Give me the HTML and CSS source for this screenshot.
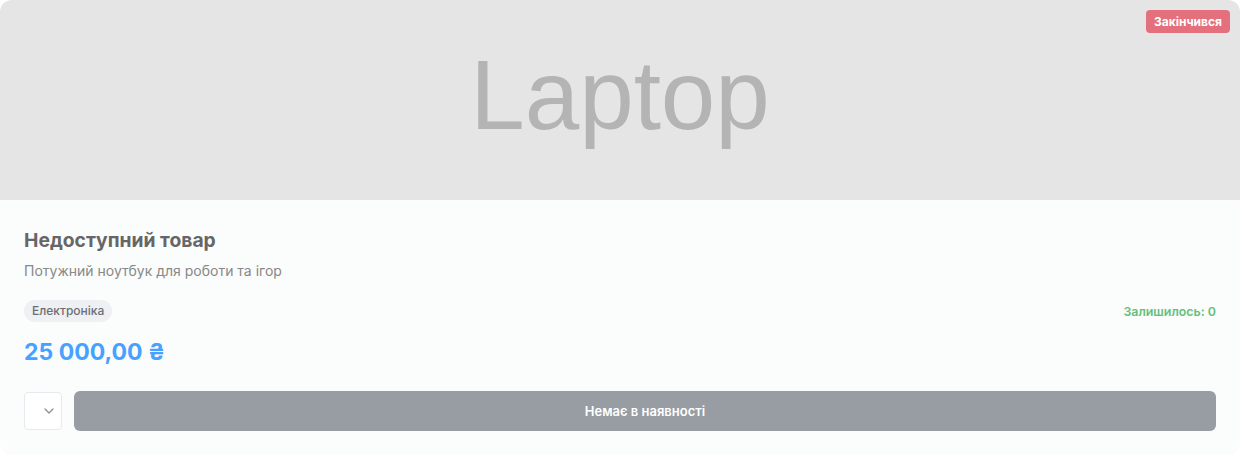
FILE: index.html
```html
<!DOCTYPE html>
<html lang="uk">
<head>
<meta charset="utf-8">
<link rel="stylesheet" href="styles.css">
</head>
<body>
<div class="card">
  <div class="media">
    <span class="media-text">Laptop</span>
    <span class="status">Закінчився</span>
  </div>
  <div class="body">
    <h3 class="title">Недоступний товар</h3>
    <p class="desc">Потужний ноутбук для роботи та ігор</p>
    <div class="meta">
      <span class="tag">Електроніка</span>
      <span class="stock">Залишилось: 0</span>
    </div>
    <div class="price">25 000,00 ₴</div>
    <div class="actions">
      <div class="qty">
        <svg width="10" height="6" viewBox="0 0 10 6"><path d="M1 1l4 4 4-4" fill="none" stroke="#8a8f96" stroke-width="1.3" stroke-linecap="round" stroke-linejoin="round"/></svg>
      </div>
      <button class="buy" disabled>Немає в наявності</button>
    </div>
  </div>
</div>
</body>
</html>
```
FILE: styles.css
```css
* { box-sizing: border-box; }
html, body { margin: 0; padding: 0; background: #ffffff; }
body { font-family: Inter, "Noto Sans", sans-serif; width: 1240px; height: 455px; }
.card {
  width: 1240px;
  height: 455px;
  border-radius: 12px;
  overflow: hidden;
  background: #fbfcfc;
  display: flex;
  flex-direction: column;
}
.media {
  position: relative;
  height: 200px;
  background: #e5e5e5;
  display: flex;
  align-items: center;
  justify-content: center;
}
.media-text {
  font-family: "Liberation Sans", Arial, sans-serif;
  font-size: 98px;
  color: #b4b4b4;
  line-height: 1;
  margin-top: -10px;
}
.status {
  position: absolute;
  top: 10px;
  right: 10px;
  background: #e5707d;
  color: #fff;
  font-size: 12px;
  font-weight: 700;
  line-height: 23px;
  padding: 0 8px;
  border-radius: 4px;
}
.body {
  padding: 26px 24px 24px;
  display: flex;
  flex-direction: column;
}
.title {
  margin: 0;
  font-size: 19.3px;
  font-weight: 650;
  color: #666666;
  line-height: 28px;
}
.desc {
  margin: 7px 0 0;
  font-size: 14px;
  color: #888888;
  line-height: 20px;
}
.meta {
  margin-top: 19px;
  display: flex;
  justify-content: space-between;
  align-items: center;
}
.tag {
  background: #eef0f3;
  color: #6b6f75;
  font-size: 12px;
  font-weight: 500;
  line-height: 22px;
  padding: 0 8px;
  border-radius: 11px;
}
.stock {
  color: #63c17a;
  font-size: 12.4px;
  font-weight: 600;
}
.price {
  margin-top: 15px;
  font-size: 23px;
  font-weight: 700;
  color: #46a2ff;
  line-height: 30px;
}
.actions {
  margin-top: 24px;
  display: flex;
  gap: 12px;
  align-items: center;
}
.qty {
  width: 38px;
  height: 38px;
  border: 1.5px solid #e8e9ee;
  border-radius: 4px;
  background: #fff;
  display: flex;
  align-items: center;
  justify-content: flex-end;
  padding-right: 7px;
}
.buy {
  flex: 1;
  height: 40px;
  border: 0;
  border-radius: 6px;
  background: #979da3;
  color: #ffffff;
  font-family: Inter, "Noto Sans", sans-serif;
  font-size: 13px;
  font-weight: 600;
}
```
